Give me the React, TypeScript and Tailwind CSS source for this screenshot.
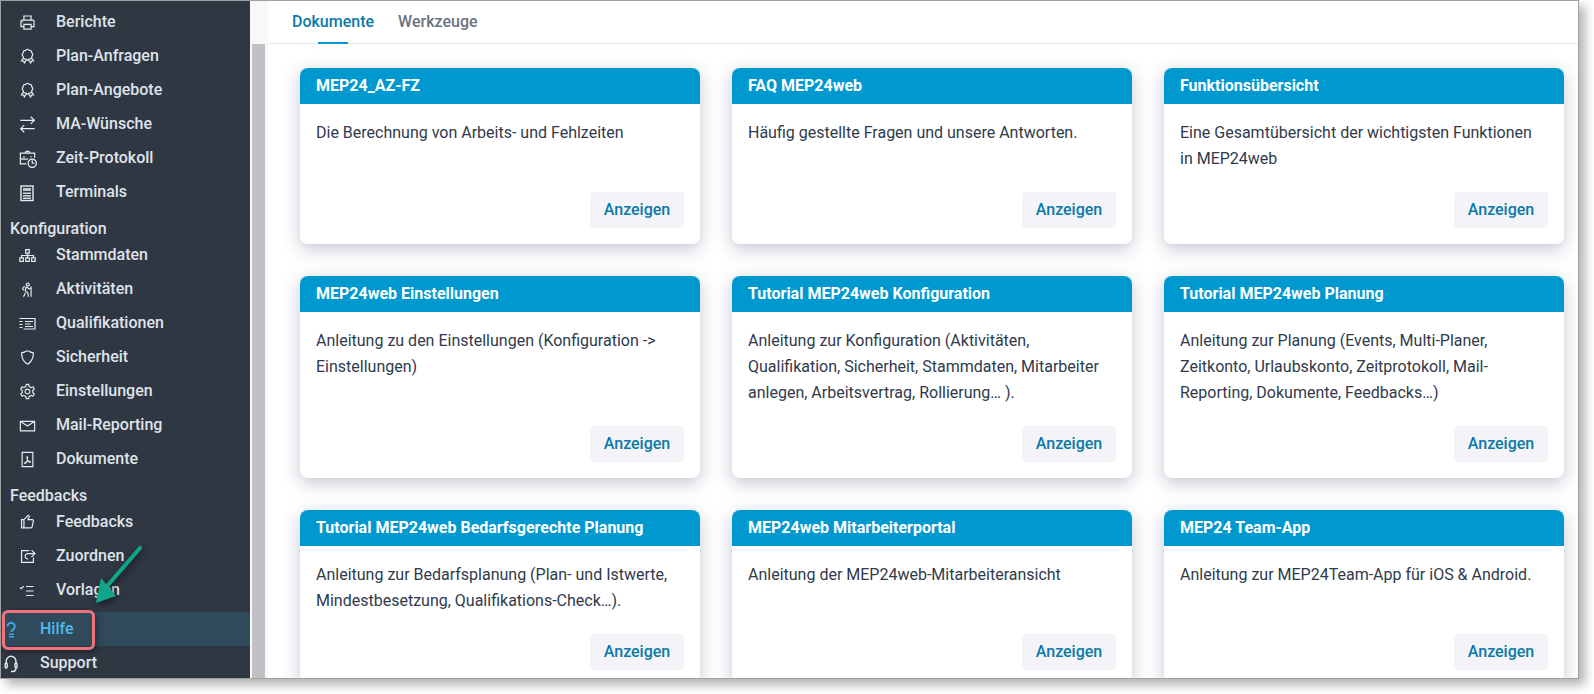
import type { ComponentType } from "react";
import {
  LiaPrintSolid,
  LiaAwardSolid,
  LiaExchangeAltSolid,
  LiaBusinessTimeSolid,
  LiaSitemapSolid,
  LiaHikingSolid,
  LiaShieldAltSolid,
  LiaCogSolid,
  LiaEnvelope,
  LiaFilePdf,
  LiaThumbsUp,
  LiaShareSquare,
} from "react-icons/lia";

type IconProps = { className?: string };
type NavItem = { label: string; icon: ComponentType<IconProps> };

function CalculatorIcon({ className }: IconProps) {
  return (
    <svg viewBox="0 0 19 19" className={className} fill="none" stroke="currentColor">
      <rect x="3" y="3" width="12" height="14.5" strokeWidth="1.4" />
      <rect x="5" y="5" width="8" height="3" fill="currentColor" stroke="none" opacity="0.8" />
      <path d="M5 10.2h8M5 12.7h8M5 15.2h8" strokeWidth="1.4" opacity="0.9" />
    </svg>
  );
}

function NewsIcon({ className }: IconProps) {
  return (
    <svg viewBox="0 0 19 19" className={className} fill="none" stroke="currentColor" strokeWidth="1.2">
      <path d="M1.5 4.5h15.5v10.5h-11.5" />
      <path d="M1.5 7.5h3M1.5 10.5h3M1.5 13.5h3M7 7.5h8M7 10h5.5M7 12.5h8" />
    </svg>
  );
}

function TasksIcon({ className }: IconProps) {
  return (
    <svg viewBox="0 0 19 19" className={className} fill="none" stroke="currentColor" strokeWidth="1.2">
      <path d="M2 6.5l1.3 1.2 2.4-2.6" />
      <path d="M8 5.5h7.5M8 10h7.5M8 14.5h7.5" />
    </svg>
  );
}

function QuestionIcon({ className }: IconProps) {
  return (
    <svg viewBox="0 0 19 19" className={className} fill="none" stroke="currentColor" strokeWidth="2.1">
      <path d="M3.4 6.5a3.7 3.7 0 1 1 6 2.9c-1.1.9-1.9 1.3-1.9 2.6" />
      <path d="M5 14.2h5M5 16.8h5" strokeWidth="1.6" />
    </svg>
  );
}

function HeadsetIcon({ className }: IconProps) {
  return (
    <svg viewBox="0 0 19 19" className={className} fill="none" stroke="currentColor" strokeWidth="1.4">
      <path d="M2.2 9V7.5a4.9 5.3 0 0 1 9.8 0V9" />
      <rect x="1.2" y="9" width="2" height="5" rx="1" />
      <rect x="11" y="9" width="2" height="5" rx="1" />
      <path d="M12 14c0 2.2-1.5 3.5-3.5 3.5H7" />
    </svg>
  );
}

const reports: NavItem[] = [
  { label: "Berichte", icon: LiaPrintSolid },
  { label: "Plan-Anfragen", icon: LiaAwardSolid },
  { label: "Plan-Angebote", icon: LiaAwardSolid },
  { label: "MA-Wünsche", icon: LiaExchangeAltSolid },
  { label: "Zeit-Protokoll", icon: LiaBusinessTimeSolid },
  { label: "Terminals", icon: CalculatorIcon },
];

const config: NavItem[] = [
  { label: "Stammdaten", icon: LiaSitemapSolid },
  { label: "Aktivitäten", icon: LiaHikingSolid },
  { label: "Qualifikationen", icon: NewsIcon },
  { label: "Sicherheit", icon: LiaShieldAltSolid },
  { label: "Einstellungen", icon: LiaCogSolid },
  { label: "Mail-Reporting", icon: LiaEnvelope },
  { label: "Dokumente", icon: LiaFilePdf },
];

const feedbacks: NavItem[] = [
  { label: "Feedbacks", icon: LiaThumbsUp },
  { label: "Zuordnen", icon: LiaShareSquare },
  { label: "Vorlagen", icon: TasksIcon },
];

const cards = [
  { title: "MEP24_AZ-FZ", text: "Die Berechnung von Arbeits- und Fehlzeiten" },
  { title: "FAQ MEP24web", text: "Häufig gestellte Fragen und unsere Antworten." },
  {
    title: "Funktionsübersicht",
    text: "Eine Gesamtübersicht der wichtigsten Funktionen in MEP24web",
  },
  {
    title: "MEP24web Einstellungen",
    text: "Anleitung zu den Einstellungen (Konfiguration -> Einstellungen)",
  },
  {
    title: "Tutorial MEP24web Konfiguration",
    text: "Anleitung zur Konfiguration (Aktivitäten, Qualifikation, Sicherheit, Stammdaten, Mitarbeiter anlegen, Arbeitsvertrag, Rollierung… ).",
  },
  {
    title: "Tutorial MEP24web Planung",
    text: "Anleitung zur Planung (Events, Multi-Planer, Zeitkonto, Urlaubskonto, Zeitprotokoll, Mail-Reporting, Dokumente, Feedbacks…)",
  },
  {
    title: "Tutorial MEP24web Bedarfsgerechte Planung",
    text: "Anleitung zur Bedarfsplanung (Plan- und Istwerte, Mindestbesetzung, Qualifikations-Check…).",
  },
  {
    title: "MEP24web Mitarbeiterportal",
    text: "Anleitung der MEP24web-Mitarbeiteransicht",
  },
  {
    title: "MEP24 Team-App",
    text: "Anleitung zur MEP24Team-App für iOS & Android.",
  },
];

function SideRow({ label, icon: Icon }: NavItem) {
  return (
    <div className="flex h-[34px] items-center pl-[17px]">
      <Icon className="w-[19px] h-[19px] shrink-0 text-[#e8ebf0]" />
      <span className="ml-[19px] text-base font-medium text-[#dfe3ea]">{label}</span>
    </div>
  );
}

function SideGroup({ title, items }: { title: string; items: NavItem[] }) {
  return (
    <div>
      <div className="pl-[9px] h-[18px] mt-[11px] flex items-center text-base font-medium text-[#dfe3ea]">
        {title}
      </div>
      {items.map((item) => (
        <SideRow key={item.label} {...item} />
      ))}
    </div>
  );
}

function Card({ title, text }: { title: string; text: string }) {
  return (
    <div className="flex flex-col rounded-lg bg-white shadow-[0_5px_18px_rgba(60,70,110,0.3)]">
      <div className="flex h-9 items-center rounded-t-lg bg-[#0099cf] px-4 text-base font-bold text-white">
        {title}
      </div>
      <div className="flex flex-1 flex-col p-4">
        <p className="mb-5 min-h-[52px] text-base leading-[26px] text-[#2f3a4c]">{text}</p>
        <button className="mt-auto self-end h-9 w-[94px] rounded bg-[#f4f4f8] text-base font-medium text-[#0b7aa8]">
          Anzeigen
        </button>
      </div>
    </div>
  );
}

export default function App() {
  return (
    <div className="h-[694px] w-[1594px] overflow-hidden bg-white font-['Roboto',sans-serif]">
      <div className="relative flex h-[679px] w-[1579px] overflow-hidden border border-[#a0a0a0] bg-white shadow-[6px_6px_10px_rgba(0,0,0,0.3)]">
        <aside className="w-[249px] shrink-0 bg-[#2f3743] pt-[4px]">
          {reports.map((item) => (
            <SideRow key={item.label} {...item} />
          ))}
          <SideGroup title="Konfiguration" items={config} />
          <SideGroup title="Feedbacks" items={feedbacks} />
          <div className="mt-[5px] flex h-[34px] items-center bg-[#304a5c] pl-[3px]">
            <QuestionIcon className="h-[19px] w-[19px] shrink-0 text-[#3aa9e2]" />
            <span className="ml-[17px] text-base font-medium text-[#4fb8ee]">Hilfe</span>
          </div>
          <div className="flex h-[34px] items-center pl-[3px]">
            <HeadsetIcon className="h-[19px] w-[19px] shrink-0 text-[#e8ebf0]" />
            <span className="ml-[17px] text-base font-medium text-[#dfe3ea]">Support</span>
          </div>
        </aside>

        <div className="flex w-[18px] shrink-0 flex-col bg-[#f8f8f9] pl-[2px] pr-[3px] pt-[43px]">
          <div className="flex-1 bg-[#c1c0c4]" />
        </div>

        <main className="min-w-0 flex-1">
          <nav className="flex h-[43px] items-center gap-6 border-b border-[#e8e8f0] pl-[24px] text-base font-medium">
            <span className="relative flex h-full items-center text-[#0b7aa8]">
              Dokumente
              <span className="absolute -bottom-px left-[26px] h-[2px] w-[30px] bg-[#0099cf]" />
            </span>
            <span className="text-[#6b7280]">Werkzeuge</span>
          </nav>
          <div className="grid grid-cols-[repeat(3,400px)] gap-8 pl-8 pt-[24px]">
            {cards.map((card) => (
              <Card key={card.title} {...card} />
            ))}
          </div>
        </main>

        {/* annotation: red box and green arrow */}
        <div className="absolute left-[1px] top-[609px] h-[40px] w-[93px] rounded-md border-[3px] border-[#f0737b] shadow-[2px_2px_6px_rgba(0,0,0,0.35)]" />
        <svg className="absolute left-[80px] top-[530px] h-[80px] w-[70px] drop-shadow-[2px_2px_3px_rgba(0,0,0,0.5)]" viewBox="0 0 70 80">
          <path d="M59 17 L27 54" stroke="#10a58a" strokeWidth="4" strokeLinecap="round" fill="none" />
          <path d="M15 72 L20 47 L35 65 Z" fill="#10a58a" />
        </svg>
      </div>
    </div>
  );
}
